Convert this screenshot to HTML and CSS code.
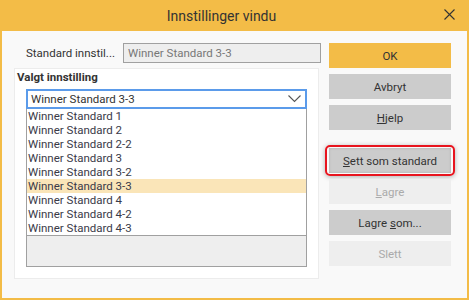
FILE: index.html
```html
<!DOCTYPE html>
<html lang="no">
<head>
<meta charset="UTF-8">
<title>Innstillinger vindu</title>
<link rel="stylesheet" href="styles.css">
</head>
<body>

<div class="window">
<div class="titlebar">
<span class="title">Innstillinger vindu</span>
<span class="close">
<svg width="11" height="11" viewBox="0 0 11 11"><path d="M0.5 0.5L10.5 10.5M10.5 0.5L0.5 10.5" stroke="#333" stroke-width="1.1" fill="none"/></svg>
</span>
</div>

<div class="content">
<div class="left">
<div class="row">
<label class="row-label">Standard innstil...</label>
<div class="readonly">Winner Standard 3-3</div>
</div>

<div class="group">
<div class="group-title">Valgt innstilling</div>
<div class="combo">
<span>Winner Standard 3-3</span>
<svg width="13" height="8" viewBox="0 0 13 8"><path d="M0.5 0.5L6.5 6.5L12.5 0.5" stroke="#555" stroke-width="1.1" fill="none"/></svg>
</div>
<ul class="list">
<li>Winner Standard 1</li>
<li>Winner Standard 2</li>
<li>Winner Standard 2-2</li>
<li>Winner Standard 3</li>
<li>Winner Standard 3-2</li>
<li class="selected">Winner Standard 3-3</li>
<li>Winner Standard 4</li>
<li>Winner Standard 4-2</li>
<li>Winner Standard 4-3</li>
</ul>
<div class="empty-box"></div>
</div>
</div>

<div class="buttons">
<button class="btn btn-ok">OK</button>
<button class="btn">Avbryt</button>
<button class="btn btn-last"><u>H</u>jelp</button>
<div class="focus-ring">
<button class="btn"><u>S</u>ett som standard</button>
</div>
<button class="btn btn-disabled"><u>L</u>agre</button>
<button class="btn">Lagre <u>s</u>om...</button>
<button class="btn btn-disabled">Slett</button>
</div>
</div>
</div>

</body>
</html>
```

FILE: styles.css
```css
body {
margin: 0;
background-color: #ffffff;
font-family: Roboto, "Liberation Sans", sans-serif;
font-size: 11.5px;
color: #333;
}

.window {
width: 469px;
height: 300px;
box-sizing: border-box;
border: 2px solid #f3bc47;
border-top: none;
background-color: #f9f9f9;
}

.titlebar {
height: 31px;
background-color: #f3bc47;
display: flex;
align-items: center;
justify-content: center;
padding-right: 26px;
position: relative;
}

.title {
font-size: 14px;
color: #333;
}

.close {
position: absolute;
right: 12px;
top: 9px;
line-height: 0;
}

.content {
display: flex;
padding: 12px 0 0 12px;
}

.left {
width: 307px;
}

.row {
display: flex;
height: 20px;
align-items: center;
}

.row-label {
width: 109px;
box-sizing: border-box;
padding-left: 12px;
white-space: nowrap;
color: #333;
}

.readonly {
width: 198px;
height: 20px;
box-sizing: border-box;
border: 1px solid #a0a0a0;
background-color: #eeeeee;
color: #777;
padding-left: 4px;
line-height: 18px;
}

.group {
width: 305px;
height: 211px;
box-sizing: border-box;
margin-top: 5px;
border: 1px solid #ececec;
background-color: #ffffff;
padding: 0 11px 0 11px;
}

.group-title {
font-weight: bold;
line-height: 16px;
margin-left: -9px;
color: #333;
}

.combo {
margin-top: 4px;
height: 20px;
box-sizing: border-box;
border: 2px solid #5b9bea;
display: flex;
align-items: center;
justify-content: space-between;
padding: 0 4px 0 3px;
color: #333;
}

.list {
list-style: none;
margin: 0;
padding: 0;
border-left: 1px solid #a0a0a0;
border-right: 1px solid #a0a0a0;
}

.list li {
line-height: 14px;
height: 14px;
padding-left: 1px;
color: #3a3a48;
}

.list li.selected {
background-color: #fae5b8;
}

.empty-box {
height: 32px;
box-sizing: border-box;
border: 1px solid #a0a0a0;
background-color: #eeeeee;
}

.buttons {
display: flex;
flex-direction: column;
margin-left: 8px;
width: 122px;
}

.btn {
width: 122px;
height: 25px;
border: none;
margin: 0 0 6px 0;
padding: 0;
background-color: #cccccc;
color: #333;
font-family: inherit;
font-size: 11.5px;
}

.btn-ok {
background-color: #f3bc47;
}

.btn-last {
margin-bottom: 15px;
}

.btn-disabled {
background-color: #eeeeee;
color: #aaaaaa;
}

.focus-ring {
margin: 0 0 3px -4px;
padding: 1px;
border: 2px solid #e8141e;
border-radius: 5px;
box-shadow: 0 1px 5px rgba(0, 0, 0, 0.3);
width: 124px;
}

.focus-ring .btn {
margin: 0 0 0 1px;
display: block;
box-shadow: inset 0 0 3px rgba(0, 0, 0, 0.15);
}
```
